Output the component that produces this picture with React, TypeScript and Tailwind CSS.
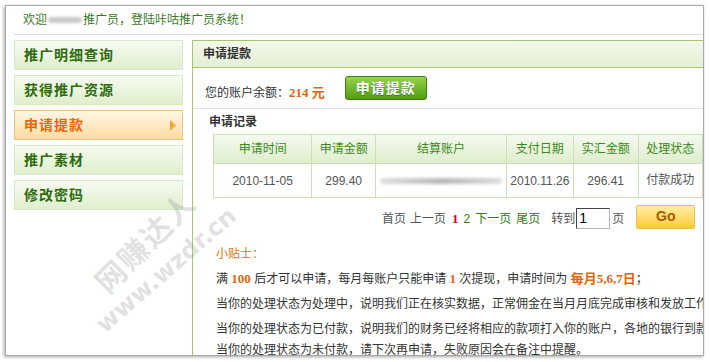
import React from "react";

const items = ["推广明细查询", "获得推广资源", "申请提款", "推广素材", "修改密码"];

export default function App() {
  return (
    <div className="w-[710px] h-[362px] bg-white font-['Liberation_Sans','Noto_Sans_CJK_SC',sans-serif] text-[12px] text-[#333] pt-[5px] pl-[5px]">
      <div className="relative w-[699px] h-[351px] border border-[#a9a9a9] shadow-[-1px_1px_3px_rgba(0,0,0,0.35)] overflow-hidden bg-white flex flex-col">
        {/* header */}
        <div className="ml-[8px] h-[29px] border-b border-[#dedede] pl-[9px] flex items-center text-[#3b7a1c] shrink-0">
          <span>欢迎</span>
          <span className="inline-block w-[34px] h-[6px] mx-[1px] rounded-full bg-[#c9c9c9] blur-[1.5px]"></span>
          <span>推广员，登陆咔咕推广员系统！</span>
        </div>
        <div className="flex flex-1 min-h-0">
          {/* sidebar */}
          <div className="ml-[8px] mr-[9px] w-[169px] pt-[5px] shrink-0">
            {items.map((t, i) => {
              const active = i === 2;
              return (
                <div
                  key={t}
                  className={
                    active
                      ? "relative h-[30px] mb-[5px] border border-[#f2c27c] bg-gradient-to-b from-[#fff7e6] to-[#ffdba0] pl-[9px] flex items-center font-bold text-[14px] tracking-[1px] text-[#e56a07]"
                      : "h-[30px] mb-[5px] border border-[#d9e8c8] bg-gradient-to-b from-[#f6fbf0] to-[#dfeecd] pl-[9px] flex items-center font-bold text-[14px] tracking-[1px] text-[#2f6b10]"
                  }
                >
                  {t}
                  {active && (
                    <svg className="absolute right-[6px] top-[9px]" width="6" height="11" viewBox="0 0 6 11">
                      <path d="M0 0 L6 5.5 L0 11 Z" fill="#f4a93a" />
                    </svg>
                  )}
                </div>
              );
            })}
          </div>
          {/* panel */}
          <div className="mt-[5px] flex-1 min-w-0 border-l border-t border-[#a5c66b] flex flex-col">
            <div className="h-[27px] border-b border-[#a5c66b] bg-gradient-to-b from-[#f4f8ec] to-[#e4efd4] pl-[10px] flex items-center font-bold text-[#333] shrink-0">
              申请提款
            </div>
            <div className="h-[41px] border-b border-[#e2e2e2] pl-[12px] flex items-start shrink-0">
              <div className="mt-[15px] flex items-center">
                <span>您的账户余额：</span>
                <span className="font-['Liberation_Serif','Noto_Sans_CJK_SC',serif] font-bold text-[13px] text-[#e0650c]">214 元</span>
              </div>
              <div className="ml-[20px] mt-[8px] w-[82px] h-[24px] rounded-[3px] border border-[#3f7d0c] bg-gradient-to-b from-[#96d548] to-[#4f9c12] flex items-center justify-center text-white font-bold text-[14px] tracking-[1px] [text-shadow:0_1px_0_rgba(0,60,0,0.4)]">
                申请提款
              </div>
            </div>
            <div className="h-[25px] pl-[16px] flex items-center font-bold text-[#333] shrink-0">申请记录</div>
            <div className="pl-[20px] shrink-0">
              <table className="border-collapse text-center">
                <thead>
                  <tr className="h-[29px] bg-gradient-to-b from-[#f4f9ee] to-[#deedcc] text-[#3d8a1c]">
                    <th className="w-[99px] border border-[#cddfb9] font-normal">申请时间</th>
                    <th className="w-[64px] border border-[#cddfb9] font-normal">申请金额</th>
                    <th className="w-[131px] border border-[#cddfb9] font-normal">结算账户</th>
                    <th className="w-[67px] border border-[#cddfb9] font-normal">支付日期</th>
                    <th className="w-[65px] border border-[#cddfb9] font-normal">实汇金额</th>
                    <th className="w-[65px] border border-[#cddfb9] font-normal">处理状态</th>
                  </tr>
                </thead>
                <tbody>
                  <tr className="h-[34px] text-[#555]">
                    <td className="border border-[#cddfb9]">2010-11-05</td>
                    <td className="border border-[#cddfb9]">299.40</td>
                    <td className="border border-[#cddfb9]">
                      <div className="mx-auto w-[122px] h-[6px] rounded-full bg-gradient-to-r from-[#e0e0e0] via-[#b9b9b9] to-[#dcdcdc] blur-[1.5px]"></div>
                    </td>
                    <td className="border border-[#cddfb9]">2010.11.26</td>
                    <td className="border border-[#cddfb9]">296.41</td>
                    <td className="border border-[#cddfb9] align-top pt-[7px]">付款成功</td>
                  </tr>
                </tbody>
              </table>
            </div>
            <div className="h-[41px] flex items-center pl-[189px] whitespace-nowrap shrink-0">
              <span className="text-[#555]">首页</span>
              <span className="ml-[4px] text-[#555]">上一页</span>
              <span className="ml-[6px] font-['Liberation_Serif',serif] font-bold text-[13px] text-[#e00000]">1</span>
              <span className="ml-[5px] text-[#2f7a12]">2</span>
              <span className="ml-[5px] text-[#2f7a12]">下一页</span>
              <span className="ml-[5px] text-[#2f7a12]">尾页</span>
              <span className="ml-[11px] text-[#555]">转到</span>
              <div className="ml-[1px] w-[34px] h-[21px] border border-[#b5b5b5] border-t-[#444] border-l-[#444] bg-white text-[14px] leading-[19px] pl-[2px] text-black">1</div>
              <span className="ml-[2px] text-[#555]">页</span>
              <div className="ml-[12px] w-[59px] h-[24px] rounded-[2px] border border-[#ebc04a] bg-gradient-to-b from-[#ffeea0] to-[#ffcb2c] flex items-center justify-center font-bold text-[14px] text-[#a95a00] -mt-[4px]">
                Go
              </div>
            </div>
            <div className="pl-[23px] whitespace-nowrap">
              <div className="h-[27px] pt-[3px] flex items-center text-[#e67300]">小贴士：</div>
              <div className="h-[25px] flex items-center">
                满&nbsp;<b className="font-['Liberation_Serif',serif] text-[13px] text-[#e0650c]">100</b>&nbsp;后才可以申请，每月每账户只能申请&nbsp;<b className="font-['Liberation_Serif',serif] text-[13px] text-[#e0650c]">1</b>&nbsp;次提现，申请时间为&nbsp;<b className="font-['Liberation_Serif','Noto_Sans_CJK_SC',serif] text-[13px] text-[#e0650c]">每月5,6,7日</b>；
              </div>
              <div className="h-[25px] flex items-center">当你的处理状态为处理中，说明我们正在核实数据，正常佣金在当月月底完成审核和发放工作。</div>
              <div className="h-[25px] flex items-center">当你的处理状态为已付款，说明我们的财务已经将相应的款项打入你的账户，各地的银行到款时间不同。</div>
              <div className="h-[18px] flex items-center">当你的处理状态为未付款，请下次再申请，失败原因会在备注中提醒。</div>
            </div>
          </div>
        </div>
        {/* watermark */}
        <div className="pointer-events-none absolute left-[76px] top-[214px] rotate-[-45deg] text-[30px] font-bold text-[rgba(150,150,150,0.28)] tracking-[2px] whitespace-nowrap">
          网赚达人
        </div>
        <div className="pointer-events-none absolute left-[72px] top-[246px] rotate-[-41deg] font-['DejaVu_Sans',sans-serif] text-[24px] font-bold text-[rgba(150,150,150,0.28)] whitespace-nowrap">
          www.wzdr.cn
        </div>
      </div>
    </div>
  );
}
